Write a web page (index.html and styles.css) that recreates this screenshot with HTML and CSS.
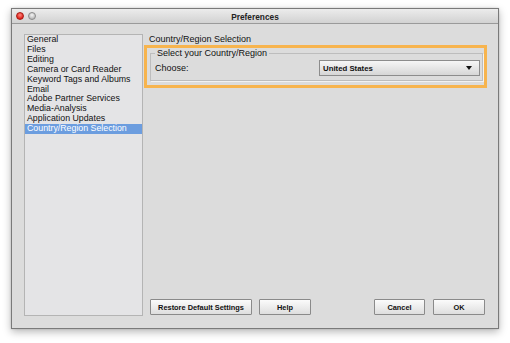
FILE: index.html
```html
<!DOCTYPE html>
<html>
<head>
<meta charset="utf-8">
<link rel="stylesheet" href="styles.css">
</head>
<body>
<div class="window">
  <div class="titlebar">
    <div class="lights">
      <span class="light close"></span>
      <span class="light min"></span>
    </div>
    <div class="title">Preferences</div>
  </div>
  <div class="body">
    <ul class="sidebar">
      <li>General</li>
      <li>Files</li>
      <li>Editing</li>
      <li>Camera or Card Reader</li>
      <li>Keyword Tags and Albums</li>
      <li>Email</li>
      <li>Adobe Partner Services</li>
      <li>Media-Analysis</li>
      <li>Application Updates</li>
      <li class="selected">Country/Region Selection</li>
    </ul>
    <div class="panel">
      <div class="panel-title">Country/Region Selection</div>
      <div class="highlight">
        <fieldset class="group">
          <legend>Select your Country/Region</legend>
          <div class="row">
            <span class="label">Choose:</span>
            <div class="select">
              <span>United States</span>
              <svg class="arrow" width="6" height="4" viewBox="0 0 6 4"><path d="M0 0 H6 L3 4 Z" fill="#111"/></svg>
            </div>
          </div>
        </fieldset>
      </div>
      <div class="buttons">
        <div class="left">
          <button class="btn restore">Restore Default Settings</button>
          <button class="btn help">Help</button>
        </div>
        <div class="right">
          <button class="btn cancel">Cancel</button>
          <button class="btn ok">OK</button>
        </div>
      </div>
    </div>
  </div>
</div>
</body>
</html>
```
FILE: styles.css
```css
html, body {
  margin: 0;
  padding: 0;
  background: #ffffff;
}
body {
  width: 510px;
  height: 343px;
  overflow: hidden;
  font-family: "Liberation Sans", Arial, sans-serif;
  font-size: 9px;
  color: #111;
}
.window {
  box-sizing: border-box;
  margin: 8px 0 0 11px;
  width: 488px;
  height: 321px;
  border: 1px solid #7a7a7a;
  background: #dcdcdc;
  box-shadow: 0 3px 8px rgba(0,0,0,0.28), 0 0 2px rgba(0,0,0,0.15);
  display: flex;
  flex-direction: column;
}
.titlebar {
  height: 14px;
  border-bottom: 1px solid #9a9a9a;
  background: linear-gradient(#ececec, #d2d2d2);
  position: relative;
  display: flex;
  align-items: center;
  justify-content: center;
}
.lights {
  position: absolute;
  left: 4px;
  top: 3px;
  display: flex;
  gap: 4px;
}
.light {
  width: 8px;
  height: 8px;
  border-radius: 50%;
  box-sizing: border-box;
}
.close {
  background: radial-gradient(circle at 50% 35%, #ff8a80, #e0231c 70%);
  border: 1px solid #a81a14;
}
.min {
  background: radial-gradient(circle at 50% 35%, #f4f4f4, #bdbdbd 70%);
  border: 1px solid #8a8a8a;
}
.title {
  font-weight: bold;
  font-size: 8.3px;
  color: #222;
  line-height: 14px;
  padding-top: 1px;
}
.body {
  flex: 1;
  display: flex;
  padding: 10px 13px 12px 12px;
  gap: 6px;
}
.sidebar {
  box-sizing: border-box;
  width: 119px;
  margin: 0;
  padding: 0;
  list-style: none;
  background: #e4e4e6;
  border: 1px solid #b4b4b4;
  line-height: 9.9px;
  font-size: 8.8px;
}
.sidebar li {
  padding-left: 2px;
  white-space: nowrap;
}
.sidebar li.selected {
  background: #6c9ddf;
  color: #fff;
}
.panel {
  flex: 1;
  display: flex;
  flex-direction: column;
}
.panel-title {
  line-height: 10px;
  margin-bottom: 1px;
}
.highlight {
  margin: 0 -2px 0 -5px;
  border: 3px solid #f7b44e;
  padding: 0 1px 4px 3px;
}
.group {
  margin: 0;
  border: 1px solid #bdbdbd;
  box-shadow: 1px 1px 0 #f2f2f2;
  padding: 2px 2px 4px 4px;
}
.group legend {
  padding: 0 2px;
  line-height: 10px;
}
.row {
  display: flex;
  align-items: center;
  justify-content: space-between;
}
.label {
  line-height: 10px;
}
.select {
  box-sizing: border-box;
  width: 161px;
  height: 16px;
  border: 1px solid #8c8c8c;
  background: linear-gradient(#f6f6f6, #d6d6d6);
  display: flex;
  align-items: center;
  justify-content: space-between;
  padding: 0 7px 0 3px;
  font-size: 7.8px;
  font-weight: bold;
}
.buttons {
  margin-top: auto;
  display: flex;
  justify-content: space-between;
  padding-left: 1px;
  margin-bottom: 1px;
}
.left, .right {
  display: flex;
  gap: 7px;
}
.right {
  gap: 8px;
}
.btn {
  box-sizing: border-box;
  height: 16px;
  margin: 0;
  padding: 0;
  border: 1px solid #8a8a8a;
  border-radius: 1px;
  background: linear-gradient(#fbfbfb, #dedede);
  font-family: "Liberation Sans", Arial, sans-serif;
  font-size: 7.4px;
  font-weight: bold;
  color: #111;
}
.restore { width: 102px; }
.help { width: 52px; }
.cancel { width: 51px; }
.ok { width: 52px; }
```
